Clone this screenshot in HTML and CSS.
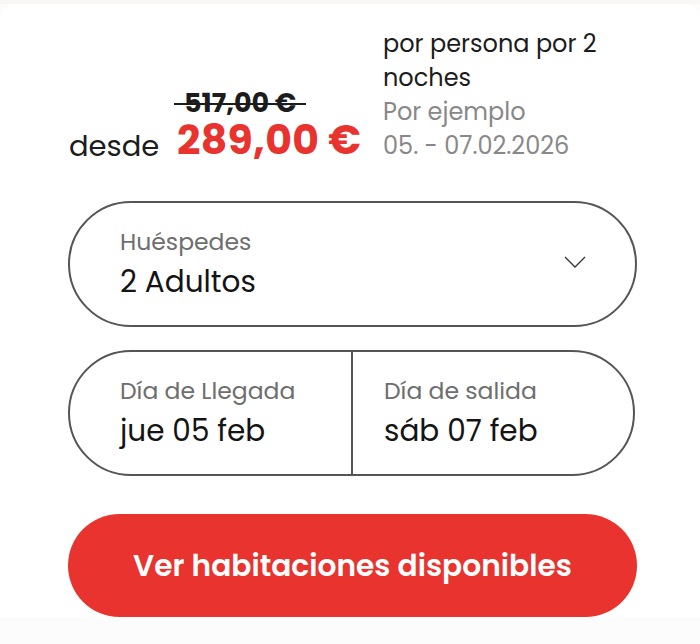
FILE: index.html
```html
<!DOCTYPE html>
<html lang="es">
<head>
<meta charset="utf-8">
<title>Reserva</title>
<link rel="stylesheet" href="styles.css">
</head>
<body>
<div class="card">
  <div class="price-row">
    <div class="price-left">
      <span class="desde">desde</span>
      <div class="price-stack">
        <span class="old-price">517,00 €</span>
        <span class="new-price">289,00 €</span>
      </div>
    </div>
    <div class="price-info">
      <div class="dark">por persona por 2 noches</div>
      <div class="muted">Por ejemplo<br>05. - 07.02.2026</div>
    </div>
  </div>
  <div class="booking">
    <div class="field guests">
      <div class="field-text">
        <div class="label">Huéspedes</div>
        <div class="value">2 Adultos</div>
      </div>
      <svg class="chevron" width="22" height="12" viewBox="0 0 22 12"><path d="M1 1 L11 11 L21 1" fill="none" stroke="#333" stroke-width="1.3"/></svg>
    </div>
    <div class="field dates">
      <div class="date-cell arrive">
        <div class="label">Día de Llegada</div>
        <div class="value">jue 05 feb</div>
      </div>
      <div class="date-cell depart">
        <div class="label">Día de salida</div>
        <div class="value">sáb 07 feb</div>
      </div>
    </div>
    <button class="cta">Ver habitaciones disponibles</button>
  </div>
</div>
</body>
</html>
```
FILE: styles.css
```css
html, body {
  margin: 0;
  padding: 0;
}
body {
  background: #fcfcfc;
  font-family: Poppins, "Open Sans", sans-serif;
  color: #1c1c1c;
  width: 700px;
  height: 644px;
  overflow: hidden;
  border-top: 4px solid #f8f7f5;
}
.card {
  background: #fff;
  border-radius: 16px 16px 0 0;
  height: 613px;
  box-sizing: border-box;
  padding: 23px 63px 0 68px;
}
.price-row {
  display: flex;
  align-items: flex-end;
}
.price-left {
  display: flex;
  align-items: flex-end;
  width: 315px;
}
.desde {
  font-size: 29px;
  line-height: 34px;
  margin-bottom: 0;
  color: #1c1c1c;
  width: 108px;
  padding-left: 1px;
}
.price-stack {
  display: flex;
  flex-direction: column;
  align-items: flex-start;
}
.old-price {
  position: relative;
  font-size: 27px;
  font-weight: 700;
  line-height: 30px;
  color: #1c1c1c;
  margin-left: 7px;
}
.old-price::after {
  content: "";
  position: absolute;
  left: -10px;
  right: -10px;
  top: 15px;
  height: 2px;
  background: #1c1c1c;
}
.new-price {
  font-size: 41px;
  font-weight: 700;
  line-height: 44px;
  letter-spacing: 0.3px;
  color: #e8332e;
  margin-bottom: 1px;
}
.price-info {
  font-size: 24px;
  line-height: 34px;
  width: 240px;
}
.price-info .dark {
  color: #1c1c1c;
}
.price-info .muted {
  color: #888;
}
.booking {
  display: flex;
  flex-direction: column;
  gap: 23px;
  margin-top: 38px;
}
.field {
  height: 126px;
  box-sizing: border-box;
  border: 2px solid #555;
  border-radius: 63px;
  display: flex;
  align-items: center;
}
.guests {
  justify-content: space-between;
  padding: 0 49px 0 50px;
}
.field-text,
.date-cell {
  padding-bottom: 1px;
}
.label {
  font-size: 23.5px;
  line-height: 28px;
  color: #6e6e6e;
}
.value {
  font-size: 29.5px;
  line-height: 36px;
  margin-top: 8px;
  color: #141414;
}
.chevron {
  display: block;
  margin-top: -5px;
}
.dates {
  margin-right: 2px;
  align-items: stretch;
}
.date-cell {
  display: flex;
  flex-direction: column;
  justify-content: center;
}
.arrive {
  width: 283px;
  box-sizing: border-box;
  padding-left: 50px;
  border-right: 2px solid #555;
}
.depart {
  padding-left: 31px;
}
.cta {
  margin-top: 15px;
  height: 103px;
  border: none;
  border-radius: 52px;
  background: #e8332e;
  color: #fff;
  font-family: Poppins, "Open Sans", sans-serif;
  font-size: 29.7px;
  font-weight: 600;
  padding: 0;
  cursor: pointer;
}
```
